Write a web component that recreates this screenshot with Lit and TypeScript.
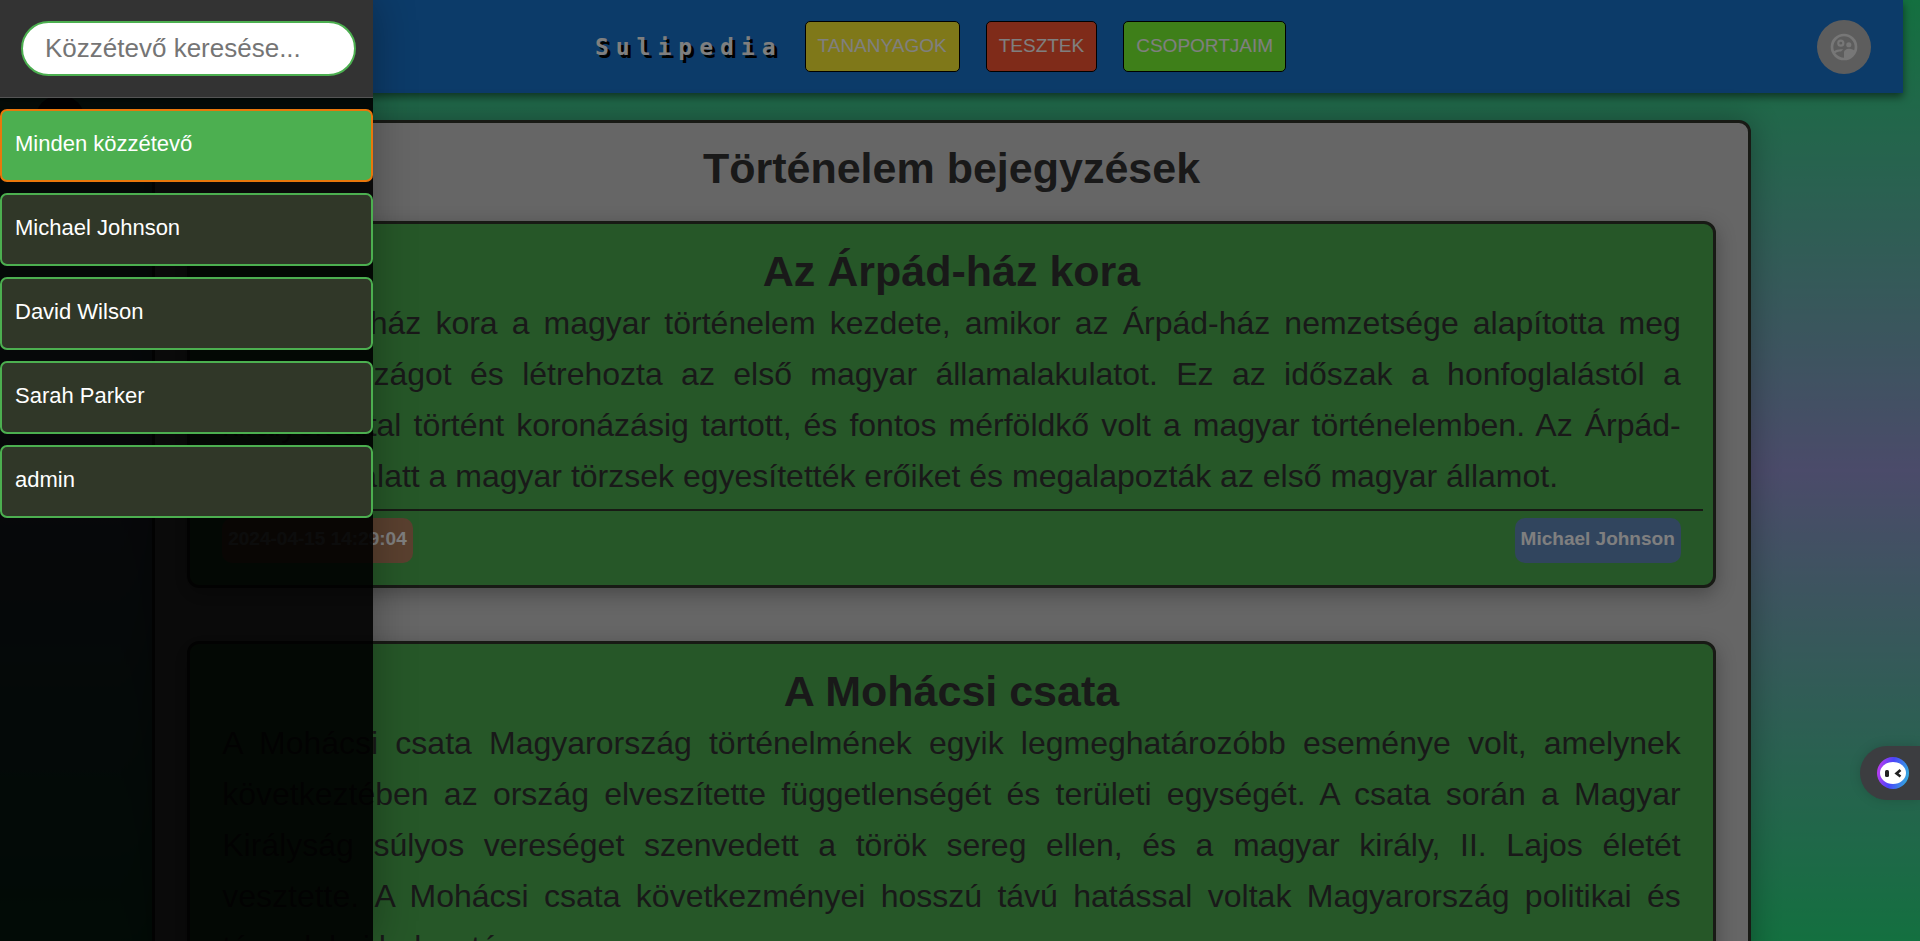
import { LitElement, html, css } from "lit";
import { customElement } from "lit/decorators.js";

interface Post {
  title: string;
  body: string;
  date: string;
  author: string;
}

const POSTS: Post[] = [
  {
    title: "Az Árpád-ház kora",
    body: "Az Árpád-ház kora a magyar történelem kezdete, amikor az Árpád-ház nemzetsége alapította meg Magyarországot és létrehozta az első magyar államalakulatot. Ez az időszak a honfoglalástól a királyok által történt koronázásig tartott, és fontos mérföldkő volt a magyar történelemben. Az Árpád-ház ideje alatt a magyar törzsek egyesítették erőiket és megalapozták az első magyar államot.",
    date: "2024-04-15 14:29:04",
    author: "Michael Johnson",
  },
  {
    title: "A Mohácsi csata",
    body: "A Mohácsi csata Magyarország történelmének egyik legmeghatározóbb eseménye volt, amelynek következtében az ország elveszítette függetlenségét és területi egységét. A csata során a Magyar Királyság súlyos vereséget szenvedett a török sereg ellen, és a magyar király, II. Lajos életét vesztette.\u00a0A Mohácsi csata következményei hosszú távú hatással voltak Magyarország politikai és társadalmi helyzetére.",
    date: "2024-04-15 14:30:12",
    author: "Michael Johnson",
  },
];

const PUBLISHERS = ["Minden közzétevő", "Michael Johnson", "David Wilson", "Sarah Parker", "admin"];

@customElement("post-card")
class PostCard extends LitElement {
  static properties = { post: { attribute: false } };
  declare post: Post;

  static styles = css`
    :host {
      display: block;
      border: 3px solid #30342a;
      border-radius: 12px;
      background: #4caf50;
      box-shadow: 0 6px 20px rgba(0, 0, 0, 0.3);
      padding: 22px 10px;
    }
    h2 {
      margin: 0;
      font-size: 43px;
      line-height: 50px;
      text-align: center;
    }
    p {
      margin: 0;
      padding: 2px 22px 7px;
      font-size: 32px;
      line-height: 51px;
      text-align: justify;
      border-bottom: 2px solid #30342a;
    }
    footer {
      display: flex;
      justify-content: space-between;
      padding: 7px 22px 0;
    }
    .badge {
      box-sizing: border-box;
      height: 45px;
      padding: 0 6px;
      border-radius: 10px;
      color: #fff;
      font-size: 19px;
      font-weight: bold;
      line-height: 42px;
    }
    .date { background: #b4805e; }
    .author { background: #628abd; }
  `;

  render() {
    return html`
      <h2>${this.post.title}</h2>
      <p>${this.post.body}</p>
      <footer>
        <time class="badge date">${this.post.date}</time>
        <span class="badge author">${this.post.author}</span>
      </footer>
    `;
  }
}

@customElement("app-root")
class AppRoot extends LitElement {
  static styles = css`
    :host {
      display: block;
      position: relative;
      height: 100vh;
      overflow: hidden;
      color: #333;
      font-family: "Liberation Sans", Arial, sans-serif;
      background: linear-gradient(to bottom, #28e080, #9696d4 50%, #28e080);
    }
    .page { padding-right: 17px; }
    nav {
      display: grid;
      grid-template-columns: 1fr auto 1fr;
      align-items: center;
      height: 93px;
      padding: 0 32px;
      box-sizing: border-box;
      background: #1976d2;
      box-shadow: 0 4px 8px rgba(0, 0, 0, 0.5);
    }
    .bar { display: flex; align-items: center; gap: 22px; grid-column: 2; padding-right: 22px; }
    .links { display: flex; gap: 26px; }
    .brand {
      color: #fff;
      font: bold 23px/30px "DejaVu Sans Mono", monospace;
      letter-spacing: 7px;
      text-shadow: 3px 3px 0 #000;
      text-decoration: none;
    }
    .link {
      box-sizing: border-box;
      height: 51px;
      padding: 0 12px;
      border: 1px solid #000;
      border-radius: 5px;
      color: #fff;
      font-size: 19px;
      line-height: 47px;
      text-decoration: none;
    }
    .yellow { background: #fff033; }
    .red { background: #ff5733; }
    .green { background: #7dff33; }
    .avatar {
      justify-self: end;
      display: grid;
      place-items: center;
      width: 54px;
      height: 54px;
      padding: 0;
      border: 0;
      border-radius: 50%;
      background: #bbb;
      color: #fff;
    }
    .avatar svg { width: 32px; height: 32px; }
    main {
      width: 84%;
      box-sizing: border-box;
      margin: 27px auto 0;
      padding: 20px 32px;
      border: 3px solid #30342a;
      border-radius: 12px;
      background: #ccc;
      box-shadow: 0 0 30px rgba(0, 0, 0, 0.3);
    }
    h1 {
      margin: 0 0 28px;
      font-size: 43px;
      line-height: 50px;
      text-align: center;
    }
    .posts { display: grid; gap: 53px; }
    .menu {
      position: absolute;
      left: 35px;
      top: 95px;
      width: 50px;
      height: 50px;
      border: 0;
      border-radius: 50%;
      background: #000;
    }
    .overlay { position: absolute; inset: 0; background: rgba(0, 0, 0, 0.5); }
    aside {
      position: absolute;
      inset: 0 auto 0 0;
      width: 373px;
      background: rgba(0, 0, 0, 0.9);
      box-shadow: 0 0 40px rgba(0, 0, 0, 0.3);
    }
    .search { padding: 21px 17px 21px 21px; border-bottom: 1px solid #555; background: #333; }
    input {
      display: block;
      box-sizing: border-box;
      width: 100%;
      height: 55px;
      padding: 0 22px;
      border: 2px solid #4caf50;
      border-radius: 28px;
      background: #fff;
      font: 26px "Liberation Sans", Arial, sans-serif;
    }
    input::placeholder { color: #757575; }
    ul { display: grid; gap: 11px; margin: 0; padding: 11px 0; list-style: none; }
    .person {
      display: block;
      width: 100%;
      height: 73px;
      padding: 0 13px 4px;
      border: 2px solid #4caf50;
      border-radius: 7px;
      background: #303728;
      color: #fff;
      font: 22px "Liberation Sans", Arial, sans-serif;
      text-align: left;
    }
    .active { background: #4caf50; border-color: #e8770c; }
    .assistant {
      position: absolute;
      right: 0;
      bottom: 141px;
      display: flex;
      align-items: center;
      width: 60px;
      height: 54px;
      padding: 0 0 0 16px;
      border: 0;
      border-radius: 27px 0 0 27px;
      background: #3c3d40;
      box-shadow: 0 0 12px rgba(0, 0, 0, 0.15);
    }
    .assistant svg { width: 34px; height: 34px; }
  `;

  render() {
    return html`
      <div class="page">
        <nav>
          <div class="bar">
            <a class="brand" href="#">Sulipedia</a>
            <div class="links">
              <a class="link yellow" href="#">TANANYAGOK</a>
              <a class="link red" href="#">TESZTEK</a>
              <a class="link green" href="#">CSOPORTJAIM</a>
            </div>
          </div>
          <button class="avatar" aria-label="Profil">
            <svg viewBox="0 0 24 24" fill="currentColor" opacity="0.75">
              <circle cx="12" cy="12" r="9" fill="none" stroke="currentColor" stroke-width="2" />
              <circle cx="9.6" cy="9.1" r="1.9" fill="none" stroke="currentColor" stroke-width="1.6" />
              <circle cx="15.6" cy="10.3" r="1.93" />
              <path d="M12 21v-5.1c0-1.4 2.2-2.5 3.6-2.5 1.2 0 3.2.4 4.2 1.2C19.200 18.500 15.900 21 12 21z" />
              <path d="M4.200 15.300c1.300-1.200 3.900-1.700 5.400-1.700.6 0 1.300.1 1.900.2-.9.5-1.400 1-1.700 1.600-1.800 0-3.500.4-4.500 1.300z" />
            </svg>
          </button>
        </nav>
        <main>
          <h1>Történelem bejegyzések</h1>
          <div class="posts">${POSTS.map((p) => html`<post-card .post=${p}></post-card>`)}</div>
        </main>
      </div>
      <button class="menu" aria-label="Menü"></button>
      <div class="overlay"></div>
      <aside>
        <div class="search">
          <input type="search" aria-label="Közzétevő keresése" placeholder="Közzétevő keresése..." />
        </div>
        <ul>
          ${PUBLISHERS.map(
            (name, i) => html`<li><button class="person ${i === 0 ? "active" : ""}">${name}</button></li>`
          )}
        </ul>
      </aside>
      <button class="assistant" aria-label="Asszisztens">
        <svg viewBox="0 0 34 34">
          <defs>
            <linearGradient id="ring" x1="0" y1="0.6" x2="1" y2="0.8">
              <stop offset="0" stop-color="#b43cf0" />
              <stop offset="0.4" stop-color="#4a44fa" />
              <stop offset="1" stop-color="#30b4dc" />
            </linearGradient>
          </defs>
          <circle cx="17" cy="17" r="16" fill="url(#ring)" />
          <ellipse cx="17" cy="17" rx="13" ry="11" fill="#fff" />
          <rect x="9" y="14" width="4" height="7" rx="1.500" fill="#222" />
          <path d="M24.500 14l-4 3.500 4 3" fill="none" stroke="#222" stroke-width="2.600" />
        </svg>
      </button>
    `;
  }
}
